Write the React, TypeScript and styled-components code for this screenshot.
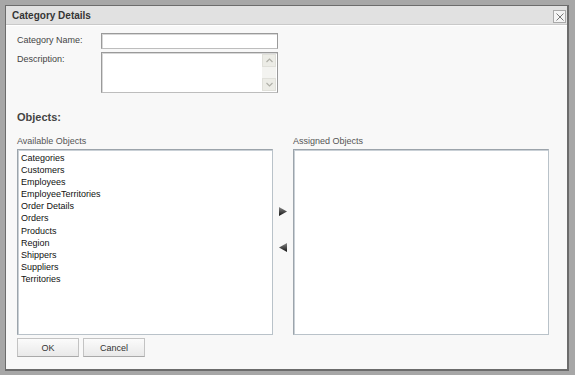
import styled, { createGlobalStyle } from 'styled-components';

const GlobalStyle = createGlobalStyle`
	html, body {
		margin: 0;
		padding: 0;
		background: #a7a7a7;
		font-family: 'Liberation Sans', Arial, sans-serif;
	}
`;

const Frame = styled.div`
	width: 575px;
	height: 375px;
	padding: 5px 5px 0 5px;
	box-sizing: border-box;
`;

const Dialog = styled.div`
	width: 564px;
	height: 366px;
	box-sizing: border-box;
	border: 1px solid #6c6c6c;
	border-right-width: 2px;
	border-bottom-width: 2px;
	background: #f8f8f8;
	display: flex;
	flex-direction: column;
`;

const TitleBar = styled.div`
	height: 18px;
	display: flex;
	align-items: center;
	justify-content: space-between;
	padding: 0 1px 0 6px;
	background: #e1e1e1;
	border-bottom: 1px solid #c9c9c9;
	box-shadow: 0 1px 0 #ffffff;
`;

const Title = styled.span`
	font-size: 10px;
	font-weight: bold;
	color: #353535;
`;

const CloseBox = styled.div`
	width: 11px;
	height: 11px;
	border: 1px solid #a9a9a9;
	background: #f4f4f4;
	display: flex;
	align-items: center;
	justify-content: center;
	margin-top: 3px;
`;

const Body = styled.div`
	padding: 8px 18px 0 11px;
	display: flex;
	flex-direction: column;
`;

const FormRow = styled.div`
	display: flex;
	align-items: flex-start;
	margin-bottom: 3px;
`;

const Label = styled.label`
	width: 84px;
	font-size: 9px;
	color: #444;
	padding-top: 2px;
`;

const TextInput = styled.div`
	width: 177px;
	height: 16px;
	box-sizing: border-box;
	border: 1px solid #9a9a9a;
	border-bottom-color: #bdbdbd;
	box-shadow: inset 1px 1px 0 #d8d8d8;
	background: #fff;
`;

const TextArea = styled(TextInput)`
	height: 41px;
	display: flex;
	justify-content: flex-end;
	padding: 1px;
`;

const ScrollBar = styled.div`
	width: 14px;
	display: flex;
	flex-direction: column;
	justify-content: space-between;
	background: #f3f3f0;
`;

const ScrollBtn = styled.div`
	height: 13px;
	background: #ecece6;
	border: 1px solid #e0e0da;
	box-sizing: border-box;
	display: flex;
	align-items: center;
	justify-content: center;
`;

const SectionTitle = styled.div`
	font-size: 11px;
	font-weight: bold;
	color: #444;
	margin-top: 15px;
`;

const Lists = styled.div`
	display: grid;
	grid-template-columns: 256px 20px 256px;
	margin-top: 13px;
`;

const ListColumn = styled.div`
	display: flex;
	flex-direction: column;
`;

const ListLabel = styled.div`
	font-size: 9px;
	color: #555;
	height: 12px;
	margin-bottom: 1px;
`;

const ListBox = styled.div`
	height: 186px;
	box-sizing: border-box;
	border: 1px solid #9ca4ab;
	border-right-color: #b9c2c9;
	border-bottom-color: #b9c2c9;
	box-shadow: inset 1px 1px 0 #c9d0d6;
	background: #fff;
	padding: 2px 3px;
`;

const Item = styled.div`
	font-size: 9px;
	color: #111;
	line-height: 12.1px;
`;

const Mover = styled.div`
	display: flex;
	flex-direction: column;
	align-items: center;
	padding-top: 71px;
	gap: 27px;
`;

const ButtonRow = styled.div`
	display: flex;
	gap: 4px;
	margin-top: 3px;
`;

const Button = styled.div`
	width: 62px;
	height: 19px;
	box-sizing: border-box;
	border: 1px solid #c3c3c3;
	border-bottom-color: #a9a9a9;
	background: linear-gradient(#fbfbfb, #e9e9e9);
	font-size: 9px;
	color: #333;
	display: flex;
	align-items: center;
	justify-content: center;
`;

const available = [
	'Categories',
	'Customers',
	'Employees',
	'EmployeeTerritories',
	'Order Details',
	'Orders',
	'Products',
	'Region',
	'Shippers',
	'Suppliers',
	'Territories'
];

const Arrow = ({ dir }: { dir: 'left' | 'right' }) => (
	<svg width="8" height="9" viewBox="0 0 8 9">
		<defs>
			<linearGradient id={`g-${dir}`} x1="0" y1="0" x2="0" y2="1">
				<stop offset="0" stopColor="#888" />
				<stop offset="1" stopColor="#111" />
			</linearGradient>
		</defs>
		<path d={dir === 'right' ? 'M0 0 L8 4.5 L0 9 Z' : 'M8 0 L0 4.5 L8 9 Z'} fill={`url(#g-${dir})`} />
	</svg>
);

export default function App() {
	return (
		<>
			<GlobalStyle />
			<Frame>
				<Dialog>
					<TitleBar>
						<Title>Category Details</Title>
						<CloseBox>
							<svg width="8" height="8" viewBox="0 0 8 8">
								<path d="M0.5 0.5 L7.5 7.5 M7.5 0.5 L0.5 7.5" stroke="#777" strokeWidth="1" />
							</svg>
						</CloseBox>
					</TitleBar>
					<Body>
						<FormRow>
							<Label>Category Name:</Label>
							<TextInput />
						</FormRow>
						<FormRow>
							<Label>Description:</Label>
							<TextArea>
								<ScrollBar>
									<ScrollBtn>
										<svg width="7" height="5" viewBox="0 0 7 5">
											<path d="M0.5 4 L3.5 1 L6.5 4" stroke="#b0b0a8" fill="none" strokeWidth="1.2" />
										</svg>
									</ScrollBtn>
									<ScrollBtn>
										<svg width="7" height="5" viewBox="0 0 7 5">
											<path d="M0.5 1 L3.5 4 L6.5 1" stroke="#b0b0a8" fill="none" strokeWidth="1.2" />
										</svg>
									</ScrollBtn>
								</ScrollBar>
							</TextArea>
						</FormRow>
						<SectionTitle>Objects:</SectionTitle>
						<Lists>
							<ListColumn>
								<ListLabel>Available Objects</ListLabel>
								<ListBox>
									{available.map((name) => (
										<Item key={name}>{name}</Item>
									))}
								</ListBox>
							</ListColumn>
							<Mover>
								<Arrow dir="right" />
								<Arrow dir="left" />
							</Mover>
							<ListColumn>
								<ListLabel>Assigned Objects</ListLabel>
								<ListBox />
							</ListColumn>
						</Lists>
						<ButtonRow>
							<Button>OK</Button>
							<Button>Cancel</Button>
						</ButtonRow>
					</Body>
				</Dialog>
			</Frame>
		</>
	);
}
